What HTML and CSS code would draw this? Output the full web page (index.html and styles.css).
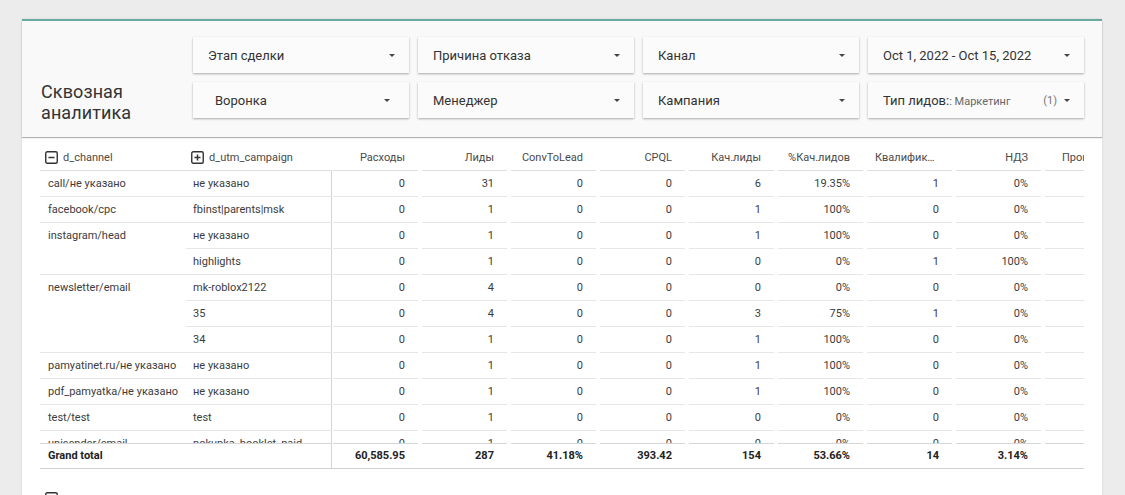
FILE: index.html
```html
<!DOCTYPE html>
<html lang="ru">
<head>
<meta charset="utf-8">
<title>Сквозная аналитика</title>
<link rel="stylesheet" href="styles.css">
</head>
<body>
<div class="card">
  <div class="header">
    <div class="title">Сквозная<br>аналитика</div>
    <div class="filters">
      <div class="filter"><span>Этап сделки</span><i class="arrow"></i></div>
      <div class="filter"><span>Причина отказа</span><i class="arrow"></i></div>
      <div class="filter"><span>Канал</span><i class="arrow"></i></div>
      <div class="filter"><span>Oct 1, 2022 - Oct 15, 2022</span><i class="arrow"></i></div>
      <div class="filter wide"><span>Воронка</span><i class="arrow"></i></div>
      <div class="filter"><span>Менеджер</span><i class="arrow"></i></div>
      <div class="filter"><span>Кампания</span><i class="arrow"></i></div>
      <div class="filter"><span>Тип лидов:<small>: Маркетинг</small></span><span class="cnt">(1)<i class="arrow"></i></span></div>
    </div>
  </div>

  <div class="table">
    <div class="row head">
      <div class="c d"><svg class="ico" viewBox="0 0 13 13"><rect x="0.75" y="0.75" width="11.5" height="11.5" rx="1.5" fill="none" stroke="#333" stroke-width="1.4"/><path d="M3.5 6.5h6" stroke="#333" stroke-width="1.5"/></svg>d_channel</div>
      <div class="c d"><svg class="ico" viewBox="0 0 13 13"><rect x="0.75" y="0.75" width="11.5" height="11.5" rx="1.5" fill="none" stroke="#333" stroke-width="1.4"/><path d="M3.5 6.5h6M6.5 3.5v6" stroke="#333" stroke-width="1.5"/></svg>d_utm_campaign</div>
      <div class="c m">Расходы</div>
      <div class="c m">Лиды</div>
      <div class="c m">ConvToLead</div>
      <div class="c m">CPQL</div>
      <div class="c m">Кач.лиды</div>
      <div class="c m">%Кач.лидов</div>
      <div class="c m ell">Квалификация</div>
      <div class="c m">НДЗ</div>
      <div class="c m last">Проиграно</div>
    </div>

    <div class="body">
      <div class="row"><div class="c d">call/не указано</div><div class="c d u">не указано</div><div class="c m">0</div><div class="c m">31</div><div class="c m">0</div><div class="c m">0</div><div class="c m">6</div><div class="c m">19.35%</div><div class="c m">1</div><div class="c m">0%</div><div class="c m"></div></div>
      <div class="row"><div class="c d">facebook/cpc</div><div class="c d u">fbinst|parents|msk</div><div class="c m">0</div><div class="c m">1</div><div class="c m">0</div><div class="c m">0</div><div class="c m">1</div><div class="c m">100%</div><div class="c m">0</div><div class="c m">0%</div><div class="c m"></div></div>
      <div class="row"><div class="c d open">instagram/head</div><div class="c d u">не указано</div><div class="c m">0</div><div class="c m">1</div><div class="c m">0</div><div class="c m">0</div><div class="c m">1</div><div class="c m">100%</div><div class="c m">0</div><div class="c m">0%</div><div class="c m"></div></div>
      <div class="row"><div class="c d"></div><div class="c d u">highlights</div><div class="c m">0</div><div class="c m">1</div><div class="c m">0</div><div class="c m">0</div><div class="c m">0</div><div class="c m">0%</div><div class="c m">1</div><div class="c m">100%</div><div class="c m"></div></div>
      <div class="row"><div class="c d open">newsletter/email</div><div class="c d u">mk-roblox2122</div><div class="c m">0</div><div class="c m">4</div><div class="c m">0</div><div class="c m">0</div><div class="c m">0</div><div class="c m">0%</div><div class="c m">0</div><div class="c m">0%</div><div class="c m"></div></div>
      <div class="row"><div class="c d open"></div><div class="c d u">35</div><div class="c m">0</div><div class="c m">4</div><div class="c m">0</div><div class="c m">0</div><div class="c m">3</div><div class="c m">75%</div><div class="c m">1</div><div class="c m">0%</div><div class="c m"></div></div>
      <div class="row"><div class="c d"></div><div class="c d u">34</div><div class="c m">0</div><div class="c m">1</div><div class="c m">0</div><div class="c m">0</div><div class="c m">1</div><div class="c m">100%</div><div class="c m">0</div><div class="c m">0%</div><div class="c m"></div></div>
      <div class="row"><div class="c d">pamyatinet.ru/не указано</div><div class="c d u">не указано</div><div class="c m">0</div><div class="c m">1</div><div class="c m">0</div><div class="c m">0</div><div class="c m">1</div><div class="c m">100%</div><div class="c m">0</div><div class="c m">0%</div><div class="c m"></div></div>
      <div class="row"><div class="c d">pdf_pamyatka/не указано</div><div class="c d u">не указано</div><div class="c m">0</div><div class="c m">1</div><div class="c m">0</div><div class="c m">0</div><div class="c m">1</div><div class="c m">100%</div><div class="c m">0</div><div class="c m">0%</div><div class="c m"></div></div>
      <div class="row"><div class="c d">test/test</div><div class="c d u">test</div><div class="c m">0</div><div class="c m">1</div><div class="c m">0</div><div class="c m">0</div><div class="c m">0</div><div class="c m">0%</div><div class="c m">0</div><div class="c m">0%</div><div class="c m"></div></div>
      <div class="row"><div class="c d">unisender/email</div><div class="c d u">pokupka_booklet_paid</div><div class="c m">0</div><div class="c m">1</div><div class="c m">0</div><div class="c m">0</div><div class="c m">0</div><div class="c m">0%</div><div class="c m">0</div><div class="c m">0%</div><div class="c m"></div></div>
    </div>

    <div class="row total">
      <div class="c d">Grand total</div><div class="c d u"></div><div class="c m">60,585.95</div><div class="c m">287</div><div class="c m">41.18%</div><div class="c m">393.42</div><div class="c m">154</div><div class="c m">53.66%</div><div class="c m">14</div><div class="c m">3.14%</div><div class="c m"></div>
    </div>
  </div>

  <div class="footer">
    <svg class="ico" viewBox="0 0 13 13"><rect x="0.75" y="0.75" width="11.5" height="11.5" rx="1.5" fill="none" stroke="#333" stroke-width="1.4"/></svg>
    <span class="pager">1 - 11 / 11</span>
  </div>
</div>
</body>
</html>
```

FILE: styles.css
```css
html, body {
  margin: 0;
  height: 495px;
  overflow: hidden;
}
body {
  background: #ececec;
  font-family: "Roboto", "Noto Sans", sans-serif;
  color: #333;
}
.card {
  margin: 19px 0 0 22px;
  width: 1080px;
  height: 480px;
  background: #fff;
  border-top: 2px solid #6aa99f;
  box-shadow: 0 0 2px rgba(0, 0, 0, 0.12);
}
.header {
  display: flex;
  height: 116px;
  box-sizing: border-box;
  padding: 16px 0 0 19px;
  background: #f9f9f9;
  box-shadow: 0 1px 1px rgba(0, 0, 0, 0.3);
  position: relative;
}
.title {
  width: 152px;
  margin-top: 44px;
  font-size: 18px;
  line-height: 21px;
  color: #333;
  letter-spacing: 0.1px;
}
.filters {
  display: grid;
  grid-template-columns: repeat(4, 216px);
  grid-auto-rows: 36px;
  column-gap: 9px;
  row-gap: 9px;
}
.filter {
  display: flex;
  align-items: center;
  justify-content: space-between;
  padding: 0 14px 0 15px;
  background: #fbfbfb;
  box-shadow: 0 1px 2px rgba(0, 0, 0, 0.32);
  font-size: 13px;
  color: #333;
  white-space: nowrap;
}
.filter.wide {
  padding: 0 19px 0 22px;
}
.filter small {
  font-size: 11px;
  color: #666;
}
.filter .cnt {
  display: flex;
  align-items: center;
  gap: 7px;
  font-size: 11px;
  color: #777;
}
.arrow {
  display: block;
  width: 0;
  height: 0;
  border-left: 3px solid transparent;
  border-right: 3px solid transparent;
  border-top: 3px solid #444;
}

.table {
  margin: 8px 0 0 18px;
  width: 1044px;
  overflow: hidden;
}
.row {
  display: grid;
  grid-template-columns: 146px 146px repeat(9, 89px);
  height: 26px;
}
.c {
  box-sizing: border-box;
  height: 26px;
  line-height: 25px;
  font-size: 11px;
  color: #3c3c3c;
  border-bottom: 1px solid #e6e6e6;
  white-space: nowrap;
  overflow: hidden;
}
.d {
  padding-left: 8px;
}
.u {
  padding-left: 7px;
  border-right: 1px solid #d4d4d4;
}
.d.open {
  border-bottom-color: transparent;
}
.m {
  margin: 0 3px 0 1px;
  padding: 0 13px 0 8px;
  text-align: right;
}
.m.ell {
  text-overflow: ellipsis;
}
.m.last {
  text-align: left;
  padding-left: 17px;
}
.head .c {
  color: #4a4a4a;
  border-bottom-color: #dedede;
  display: block;
}
.head .d {
  display: flex;
  align-items: center;
  padding-left: 5px;
  gap: 5px;
}
.ico {
  width: 13px;
  height: 13px;
  flex: none;
}
.body {
  height: 272px;
  overflow: hidden;
}
.total .c {
  height: 26px;
  border-top: 1px solid #d6d6d6;
  border-bottom: none;
  font-weight: bold;
  color: #222;
  line-height: 24px;
}
.total {
  border-bottom: 1px solid #d0d0d0;
  height: 26px;
  width: 1044px;
  box-sizing: border-box;
}
.footer {
  display: flex;
  justify-content: space-between;
  align-items: flex-start;
  margin: 23px 0 0 23px;
  width: 1038px;
}
.pager {
  font-size: 11px;
  line-height: 13px;
  margin-top: 1px;
  color: #444;
}
```
